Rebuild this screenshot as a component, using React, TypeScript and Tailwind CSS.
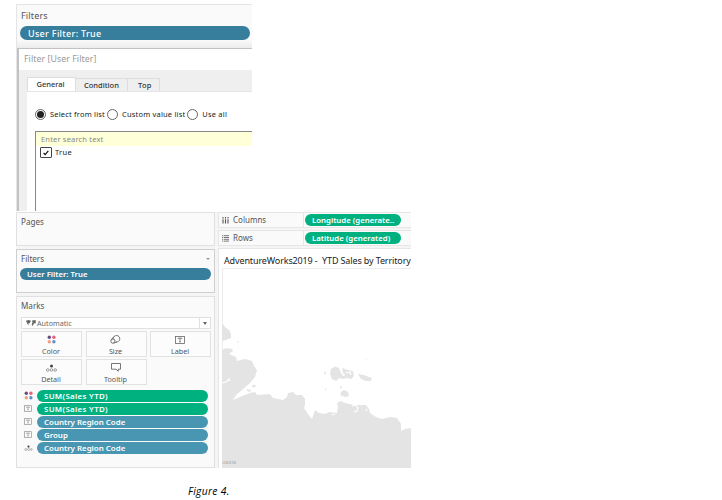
import type { ReactNode } from "react";

const dots = (
  <svg width="9" height="9" viewBox="0 0 9 9">
    <circle cx="2.3" cy="2.2" r="1.7" fill="#6a4a80" />
    <circle cx="6.9" cy="2.2" r="1.7" fill="#e8607a" />
    <circle cx="2.3" cy="6.8" r="1.7" fill="#f0a080" />
    <circle cx="6.9" cy="6.8" r="1.7" fill="#5f8fc8" />
  </svg>
);

const sizeIcon = (
  <svg width="11" height="9" viewBox="0 0 11 9" fill="none" stroke="#666" strokeWidth=".9">
    <path d="M3.2 3.9A3.3 3.3 0 1 1 5.8 7" />
    <circle cx="2.9" cy="6.1" r="2.1" />
    <path d="M1.2 4.9 4 1.5M3.5 8.2l3.2-1.2" />
  </svg>
);

function LabelIcon({ small = false }: { small?: boolean }) {
  return (
    <svg width={small ? 8 : 10} height={small ? 7 : 8} viewBox="0 0 10 8" fill="none" stroke={small ? "#888" : "#666"} strokeWidth=".8">
      <rect x=".5" y=".5" width="9" height="7" />
      <path d="M3.2 3V2.2h3.6V3M5 2.2v3.7M4.2 5.9h1.6" />
    </svg>
  );
}

function DetailIcon({ small = false }: { small?: boolean }) {
  return (
    <svg width={small ? 9 : 11} height={small ? 6 : 8} viewBox="0 0 11 8" fill="none" stroke="#888" strokeWidth=".8">
      <circle cx="5.5" cy="2" r="1.5" fill="#444" stroke="none" />
      <circle cx="1.8" cy="6" r="1.3" />
      <circle cx="5.5" cy="6" r="1.3" />
      <circle cx="9.2" cy="6" r="1.3" />
    </svg>
  );
}

const tooltipIcon = (
  <svg width="10" height="9" viewBox="0 0 10 9" fill="none" stroke="#666" strokeWidth=".9">
    <path d="M.5.5h9v5.7H7.3v2L5 6.2H.5z" />
  </svg>
);

function MarkButton({ icon, label }: { icon: ReactNode; label: string }) {
  return (
    <div className="flex h-[26px] flex-col items-center border border-[#e2e2e2] bg-[#fcfcfc]">
      <div className="flex h-[15px] items-center pr-px">{icon}</div>
      <div className="pr-px text-[7.2px] leading-[9px] text-[#555]">{label}</div>
    </div>
  );
}

function MarkRow({ icon, label, color }: { icon: ReactNode; label: string; color: string }) {
  return (
    <div className="flex h-[13px] items-center">
      <div className="flex w-[18px] justify-center">{icon}</div>
      <div className={`h-[12px] w-[171px] rounded-full pl-[7px] font-semibold leading-[13px] text-white ${color}`}>{label}</div>
    </div>
  );
}

function Radio({ label, on = false }: { label: string; on?: boolean }) {
  return (
    <div className="flex items-center gap-[4px]">
      <span className="flex size-[11px] shrink-0 items-center justify-center rounded-full border border-[#666] bg-white">
        {on && <span className="size-[7px] rounded-full bg-[#222]" />}
      </span>
      <span>{label}</span>
    </div>
  );
}

function FilterDialog() {
  return (
    <section className="ml-[16px] h-[207px] w-[236px] overflow-hidden border-l border-t border-[#e5e5e5] bg-[#fafafa]">
      <div className="h-[21px] pl-[4px] pt-[4px] text-[9px] leading-[13px] tracking-[0.15px] text-[#555]">Filters</div>
      <div className="ml-[3px] h-[14px] w-[230px] rounded-full bg-[#377d9c] pl-[8px] text-[9px] font-medium leading-[15px] tracking-[0.3px] text-white">User Filter: True</div>
      <div className="h-[8px] bg-linear-to-b from-[#fafafa] to-[#ececec]" />
      <div className="h-[163px] border-l-2 border-t border-[#c2c2c2] bg-[#efefef]">
        <div className="h-[21px] bg-white pl-[5px] text-[8.8px] leading-[21px] tracking-[0.05px] text-[#999]">Filter [User Filter]</div>
        <div className="flex h-[21px] items-end pl-[8px] text-[7.5px] font-medium text-[#333]">
          <div className="h-[14px] w-[49px] border-x border-t border-[#ddd] bg-white pl-[8.5px] leading-[12px]">General</div>
          <div className="h-[13px] w-[52px] border-r border-t border-[#ddd] pl-[8px] leading-[12px]">Condition</div>
          <div className="h-[13px] w-[32px] border-r border-t border-[#ddd] pl-[10px] leading-[12px] tracking-[0.25px]">Top</div>
        </div>
        <div className="ml-[8px] h-[121px] border-t border-[#e5e5e5] bg-white pl-[8px] pt-[17px]">
          <div className="flex h-[11px] items-center gap-[2px] text-[7.5px] tracking-[0.19px] text-[#222]">
            <Radio label="Select from list" on />
            <Radio label="Custom value list" />
            <Radio label="Use all" />
          </div>
          <div className="mt-[11px] h-[82px] border-l border-t border-[#888]">
            <div className="h-[14px] bg-[#ffffd8] pl-[5px] text-[7.5px] leading-[14px] tracking-[0.18px] text-[#888]">Enter search text</div>
            <div className="flex items-center gap-[3px] pl-[4px] pt-px text-[7.5px] tracking-[0.3px] text-[#222]">
              <span className="flex h-[11px] w-[12px] items-center justify-center rounded-[1px] border border-[#444]">
                <svg width="6" height="6" viewBox="0 0 6 6" fill="none" stroke="#111" strokeWidth="1.2"><path d="M.6 3 2.2 4.7 5.3.8" /></svg>
              </span>
              True
            </div>
          </div>
        </div>
      </div>
    </section>
  );
}

function Shelf({ icon, name, pill }: { icon: ReactNode; name: string; pill: string }) {
  return (
    <div className="flex h-[16px] items-center border-y border-l border-[#e6e6e6] bg-[#fafafa]">
      <div className="flex h-full w-[85px] items-center gap-[4px] border-r border-[#e6e6e6] pl-[3px] text-[8px] text-[#555]">
        {icon}
        {name}
      </div>
      <div className="ml-[1px] h-[12px] w-[96px] whitespace-nowrap rounded-full bg-[#00b180] pl-[7px] text-[7.8px] font-semibold leading-[12px] text-white">{pill}</div>
    </div>
  );
}

function LandMap() {
  return (
    <svg className="ml-[3px] block" width="189" height="200" viewBox="222 268 189 200">
      <path d="M222.5 468V268.5H411" fill="none" stroke="#ececec" />
      <g fill="#e4e4e4">
        <path d="M222 325L223 324 225 327 229 330 231 334V338L226 340 222 341z" />
        <path d="M222 350L226 348 232 349 233 351 229 354 236 357 237 361 245 359 252 361 254 366 257 370 255 377 250 383 242 390 236 395 233 400 240 397 250 393 255 392 257 395 270 394 273 398 283 400 287 397 288 393 293 392 296 395 302 395 305 399V405L304 408 308 414 312 419 315 410 319 413 325 414 329 412 337 413 338 406 337 403 341 401 345 403 354 405 366 405 369 409 370 413 376 417 382 419 390 417 397 418 401 424 401 431 405 429 411 428V468H222z" />
        <path d="M252 386L254 384.500 256 385.500 255 387.500 252 387zM247 389L251 390 250 392 247 391zM236 386L237 388 236 389 235 387z" />
        <path d="M330 374L331 369 335 366.500 339 368 341 373 343 376 346 375 347 378 343 379 339 378 336 381 332 379z" />
        <path d="M342 368L345 369 348 370 353 371 354 376 351 379 347 378 345 375 343 373z" />
        <path d="M358 374L364 375 369 377 372 378 371 381 366 381 361 379zM341 392L344 390 348 392 349 396 345 397 340 395zM340 386L342 387 341 389 340 388z" />
        <path d="M325 371L326 373 325 375 324 373zM325 388L326 389 325 391zM237 341L239 342 238 343zM366 358L367 359 366 360z" />
      </g>
      <g fill="none" stroke="white" strokeWidth="1.2">
        <path d="M222 383L226 382 229 379 230 381M352 406L356 405 358 408 357 411 354 412M335 414L332 415M367 409L366 411M346 373L350 372 351 375" />
      </g>
      <text x="222" y="464" fontSize="5.8" fill="#aaa" fontFamily="Noto Sans, sans-serif">ussia</text>
    </svg>
  );
}

function Workspace() {
  return (
    <section className="ml-[16px] mt-px flex h-[256px] w-[395px] overflow-hidden bg-[#f5f5f5]">
      <div className="flex w-[199px] flex-col gap-[3px]">
        <div className="h-[34px] border border-[#e0e0e0] bg-[#fafafa] pl-[4px] pt-[2px] text-[8.1px] leading-[13px] text-[#555]">Pages</div>
        <div className="h-[44px] border border-[#cfcfcf] bg-[#fafafa]">
          <div className="flex h-[18px] items-center justify-between pl-[4px] pr-[4px] text-[8.1px] text-[#555]">
            Filters
            <span className="h-0 w-0 border-x-2 border-t-2 border-x-transparent border-t-[#999]" />
          </div>
          <div className="ml-[3px] h-[12px] w-[191px] rounded-full bg-[#377d9c] pl-[7px] text-[7.8px] font-semibold leading-[12px] text-white">User Filter: True</div>
        </div>
        <div className="h-[172px] border border-[#e0e0e0] bg-[#fafafa] px-[4px]">
          <div className="h-[20px] pt-[2px] text-[8.1px] leading-[13px] text-[#555]">Marks</div>
          <div className="flex h-[12px] w-[190px] items-center border border-[#e0e0e0] bg-white pl-[4px] text-[7.2px] text-[#666]">
            <svg width="10" height="7" viewBox="0 0 10 7" fill="#666"><path d="M0 .8 2.5 0 5 .8 3.6 3.5 2.5 3 2.6 5.500 1.500 4 .5 2zM6 .5 9.7 0v3.6L8 3.3 6.8 6 5.6 4.5 6.5 2.5z" /></svg>
            <span className="ml-[1px] flex-1">Automatic</span>
            <span className="flex h-full w-[11px] items-center justify-center border-l border-[#e0e0e0]">
              <span className="h-0 w-0 border-x-2 border-t-[3px] border-x-transparent border-t-[#666]" />
            </span>
          </div>
          <div className="mt-[2px] grid w-[190px] grid-cols-3 gap-x-[3.5px] gap-y-[2px]">
            <MarkButton icon={dots} label="Color" />
            <MarkButton icon={sizeIcon} label="Size" />
            <MarkButton icon={<LabelIcon />} label="Label" />
            <MarkButton icon={<DetailIcon />} label="Detail" />
            <MarkButton icon={tooltipIcon} label="Tooltip" />
          </div>
          <div className="-ml-[2px] mt-[4px] text-[7.9px]">
            <MarkRow icon={dots} label="SUM(Sales YTD)" color="bg-[#00b180] tracking-[0.32px]" />
            <MarkRow icon={<LabelIcon small />} label="SUM(Sales YTD)" color="bg-[#00b180] tracking-[0.32px]" />
            <MarkRow icon={<LabelIcon small />} label="Country Region Code" color="bg-[#4996b2]" />
            <MarkRow icon={<LabelIcon small />} label="Group" color="bg-[#4996b2]" />
            <MarkRow icon={<DetailIcon small />} label="Country Region Code" color="bg-[#4996b2]" />
          </div>
        </div>
      </div>
      <div className="ml-[3px] flex w-[193px] flex-col">
        <Shelf
          icon={<svg width="7" height="7" viewBox="0 0 7 7" stroke="#555" strokeWidth="1.1"><path d="M1 0v1.5M3.5 0v1.5M6 0v1.5M1 2.2V6.5M3.5 2.2V6.5M6 2.2V6.5" /></svg>}
          name="Columns"
          pill="Longitude (generate.."
        />
        <div className="h-[2px]" />
        <Shelf
          icon={<svg width="7" height="7" viewBox="0 0 7 7" stroke="#777" strokeWidth="1"><path d="M0 .7h1.3M2 .7h5M0 2.5h1.3M2 2.5h5M0 4.3h1.3M2 4.3h5M0 6.1h1.3M2 6.1h5" /></svg>}
          name="Rows"
          pill="Latitude (generated)"
        />
        <div className="mt-[2px] h-[220px] border-l border-t border-[#e6e6e6] bg-white">
          <div className="h-[19px] whitespace-pre pl-[5px] text-[9px] leading-[23px] tracking-[-0.13px] text-[#222]">{"AdventureWorks2019 -  YTD Sales by Territory"}</div>
          <LandMap />
        </div>
      </div>
    </section>
  );
}

export default function App() {
  return (
    <main className="h-[500px] w-[722px] overflow-hidden bg-white pt-[4px] font-['Noto_Sans',sans-serif]">
      <FilterDialog />
      <Workspace />
      <p className="ml-[188px] mt-[16px] font-['Open_Sans',sans-serif] text-[10.3px] font-medium italic leading-[14px] tracking-[0.3px] text-black">Figure 4.</p>
    </main>
  );
}
